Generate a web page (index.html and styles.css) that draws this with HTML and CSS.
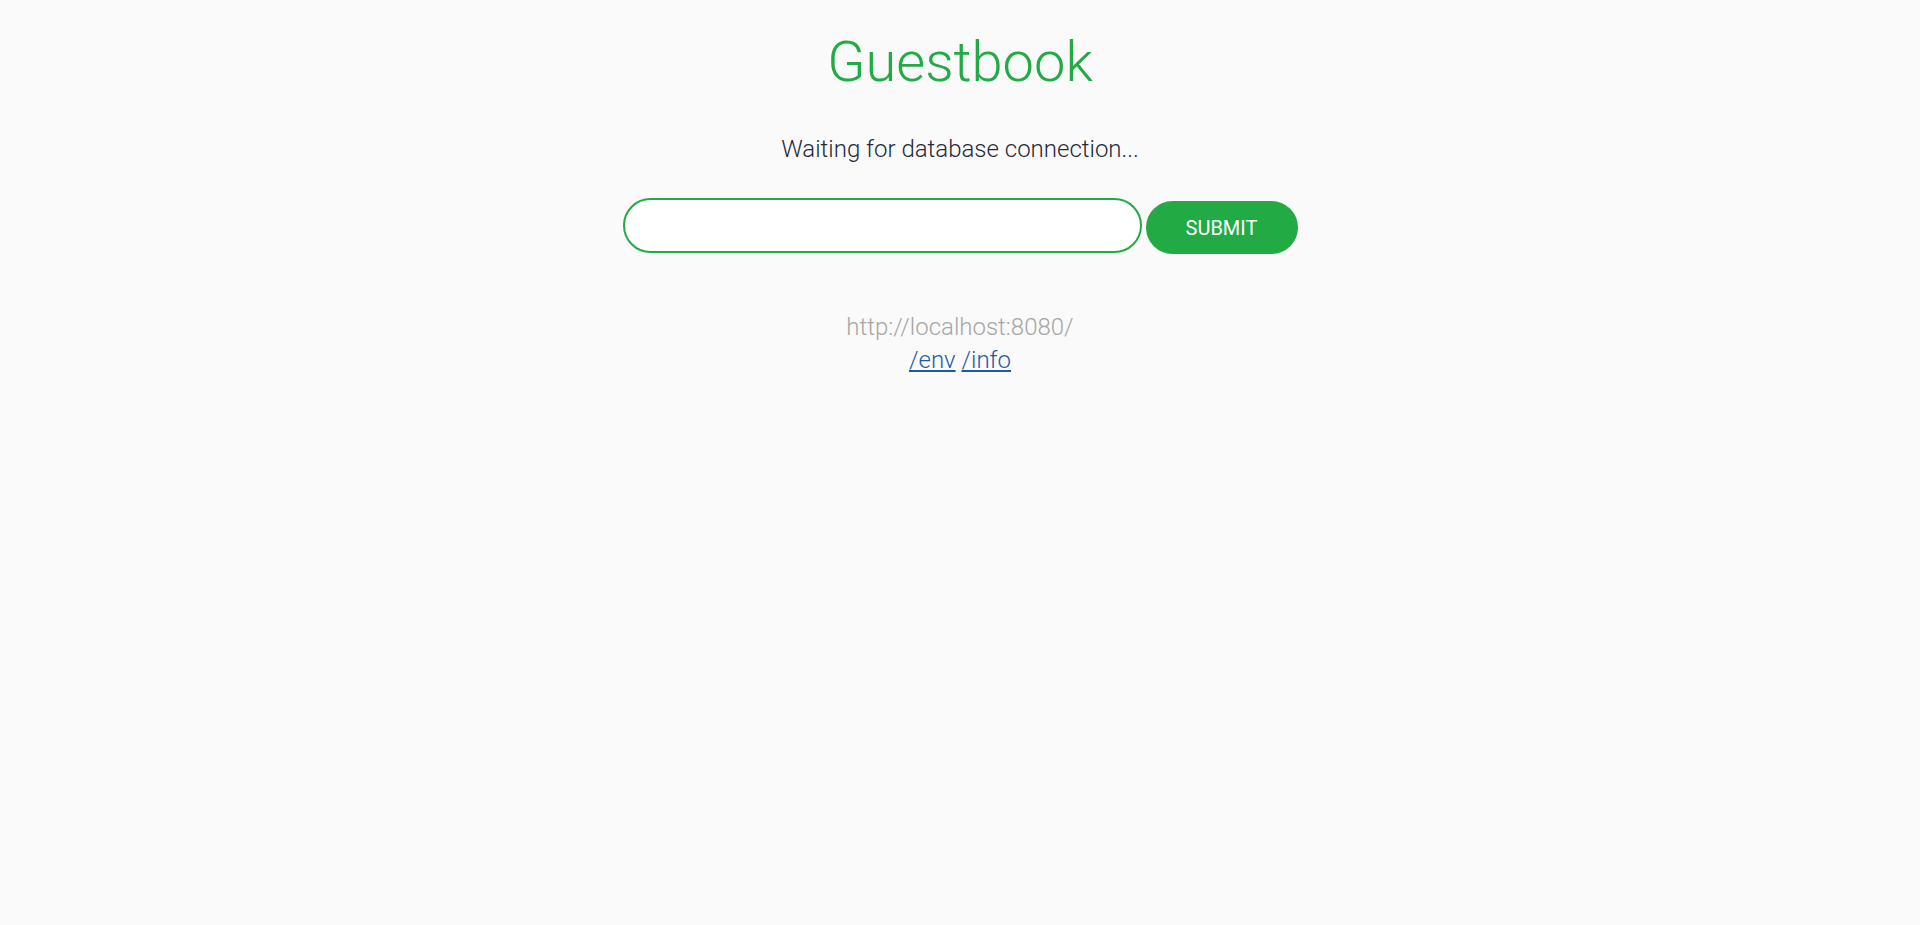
FILE: index.html
```html
<!DOCTYPE html>
<html>
<head>
<meta charset="utf-8">
<title>Guestbook</title>
<link rel="stylesheet" href="styles.css">
</head>
<body>
<main class="page">
  <h1 class="title">Guestbook</h1>
  <p class="status">Waiting for database connection...</p>
  <form class="entry-form">
    <input class="entry-input" type="text">
    <button class="submit-btn" type="button">SUBMIT</button>
  </form>
  <div class="footer">
    <div class="host">http://localhost:8080/</div>
    <div class="links"><a href="#">/env</a> <a href="#">/info</a></div>
  </div>
</main>
</body>
</html>
```

FILE: styles.css
```css
html, body {
  margin: 0;
  padding: 0;
  background: #fafafa;
}
body {
  font-family: Roboto, "Liberation Sans", sans-serif;
  font-weight: 300;
}
.page {
  display: flex;
  flex-direction: column;
  align-items: center;
}
.title {
  margin: 27px 0 0;
  font-size: 56px;
  font-weight: 300;
  line-height: 70px;
  color: #22ab44;
}
.status {
  margin: 38px 0 0;
  font-size: 24px;
  line-height: 28px;
  color: #1f2a3a;
}
.entry-form {
  margin: 35px 0 0;
  display: flex;
  align-items: flex-start;
  gap: 4px;
}
.entry-input {
  box-sizing: border-box;
  width: 519px;
  height: 55px;
  border: 2px solid #22ab44;
  border-radius: 28px;
  background: #fff;
  outline: none;
  padding: 0 20px;
  font-family: inherit;
  font-size: 24px;
}
.submit-btn {
  margin-top: 3px;
  box-sizing: border-box;
  width: 152px;
  height: 53px;
  border: none;
  border-radius: 27px;
  background: #22ab44;
  color: #fff;
  font-family: Roboto, "Liberation Sans", sans-serif;
  font-size: 20px;
  font-weight: 400;
  padding: 0;
}
.footer {
  margin-top: 57px;
  font-size: 24px;
  line-height: 33px;
  text-align: center;
}
.host {
  color: #a6a6a6;
}
.links a {
  color: #1e5aa8;
  text-decoration: underline;
}
```
